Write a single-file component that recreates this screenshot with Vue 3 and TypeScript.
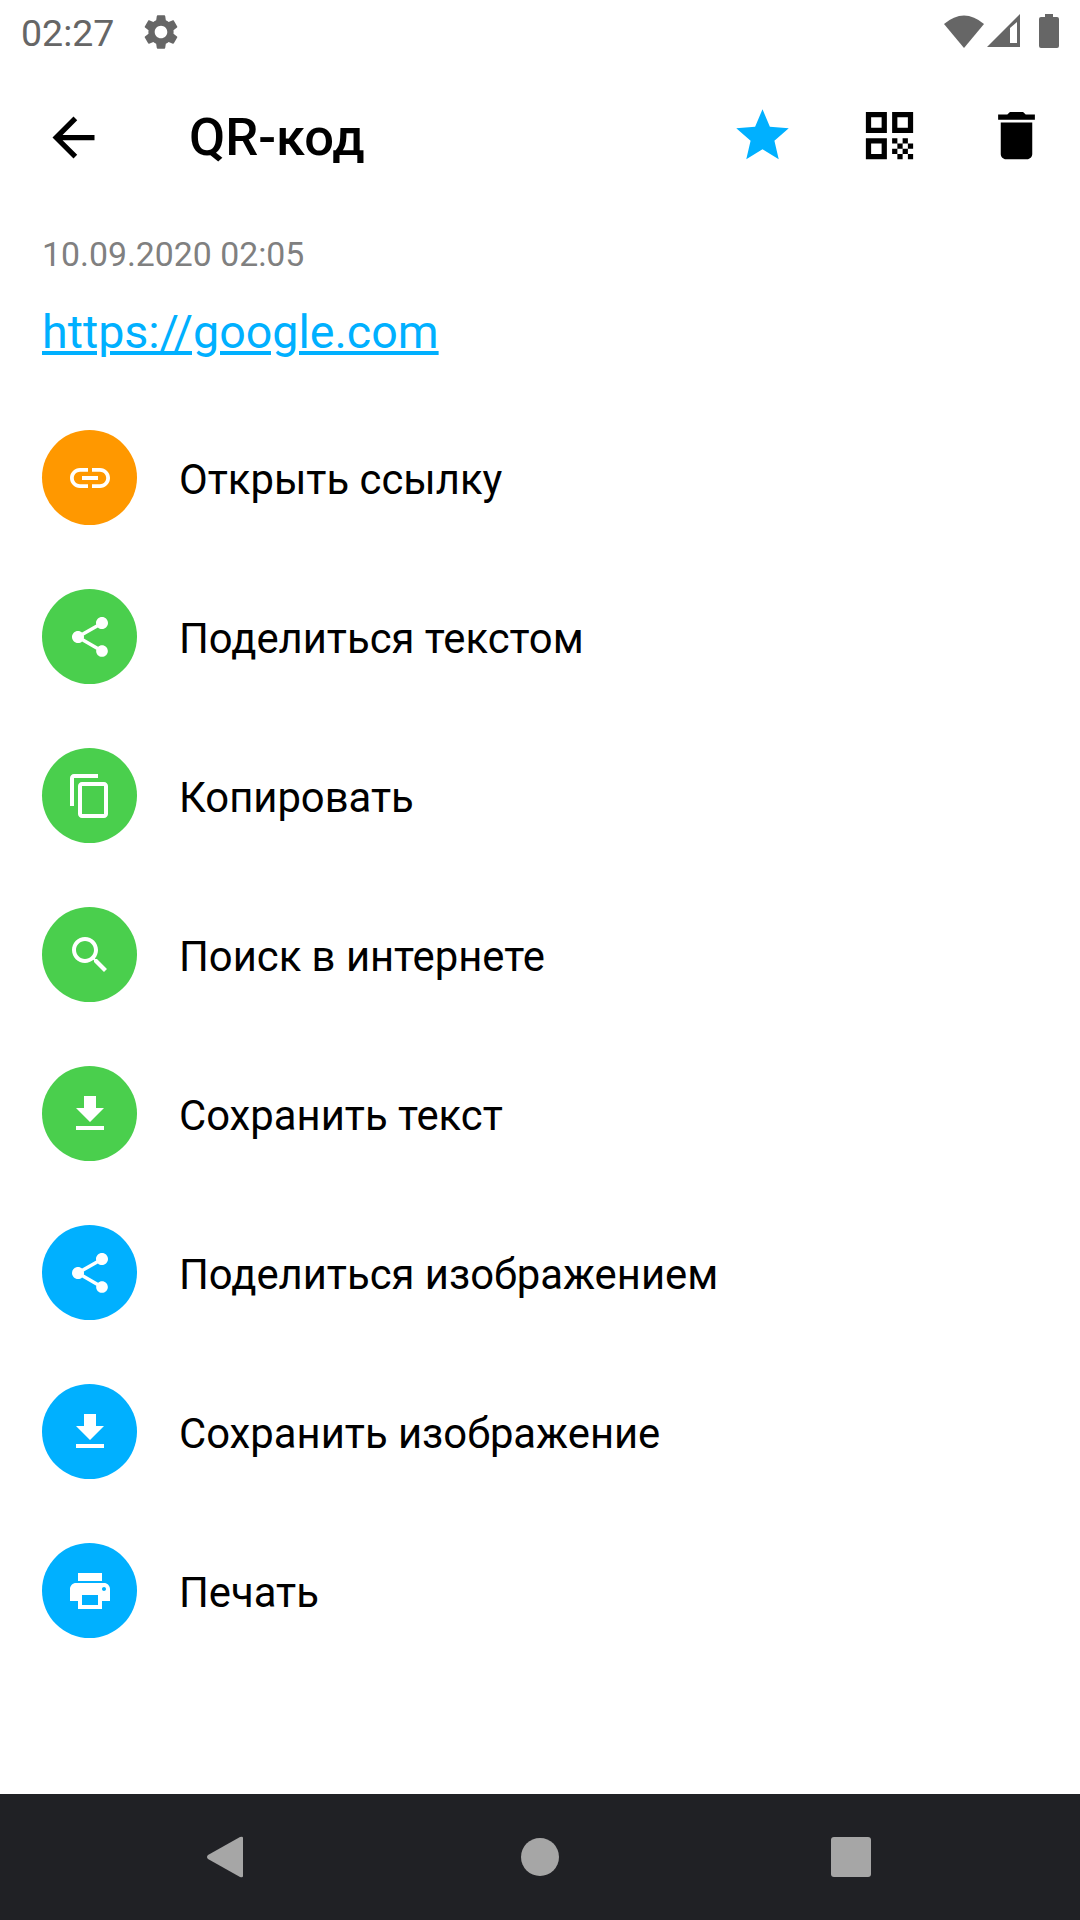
<template>
  <div class="screen">
    <div class="status-bar">
      <span class="clock">02:27</span>
      <svg class="gear" viewBox="0 0 24 24"><path :d="gearPath" /></svg>
      <div class="status-icons">
        <svg class="wifi" width="40" height="34" viewBox="0 0 40 34"><path d="M0 10 Q20 -7 40 10 L20 34 Z" /></svg>
        <svg class="signal" width="33" height="33" viewBox="0 0 33 33">
          <path fill-rule="evenodd" d="M33 0 V33 H0 Z M30 8 L23 14 V29 H30 Z" />
        </svg>
        <svg class="battery" width="20" height="34" viewBox="0 0 20 34">
          <path d="M6 0 H14 V3 H18 Q20 3 20 5 V32 Q20 34 18 34 H2 Q0 34 0 32 V5 Q0 3 2 3 H6 Z" />
        </svg>
      </div>
    </div>

    <header class="toolbar">
      <svg class="back" viewBox="0 0 24 24"><path d="M20 11H7.83l5.59-5.59L12 4l-8 8 8 8 1.41-1.41L7.83 13H20v-2z" /></svg>
      <h1 class="title">QR-код</h1>
      <div class="actions">
        <svg class="star" viewBox="0 0 24 24"><path d="M12 17.27L18.18 21l-1.64-7.03L22 9.24l-7.19-.61L12 2 9.19 8.63 2 9.24l5.46 4.73L5.82 21z" /></svg>
        <svg viewBox="0 0 24 24"><path d="M3 11h8V3H3v8zm2-6h4v4H5V5zM3 21h8v-8H3v8zm2-6h4v4H5v-4zM13 3v8h8V3h-8zm6 6h-4V5h4v4zM19 19h2v2h-2zM13 13h2v2h-2zM15 15h2v2h-2zM13 17h2v2h-2zM15 19h2v2h-2zM17 17h2v2h-2zM17 13h2v2h-2zM19 15h2v2h-2z" /></svg>
        <svg viewBox="0 0 24 24"><path d="M6 19c0 1.1.9 2 2 2h8c1.1 0 2-.9 2-2V7H6v12zM19 4h-3.5l-1-1h-5l-1 1H5v2h14V4z" /></svg>
      </div>
    </header>

    <main class="content">
      <div class="date">10.09.2020 02:05</div>
      <a class="link">https://google.com</a>
      <ul class="list">
        <li v-for="item in items" :key="item.label" class="row">
          <span class="circle" :class="item.color">
            <svg viewBox="0 0 24 24"><path :d="item.icon" /></svg>
          </span>
          <span class="label">{{ item.label }}</span>
        </li>
      </ul>
    </main>

    <nav class="nav-bar">
      <svg width="36" height="42" viewBox="0 0 36 42"><path d="M36 2 V40 Q36 42 33 41 L1 23 Q-1 21 1 19 L33 1 Q36 0 36 2 Z" /></svg>
      <span class="home"></span>
      <span class="recent"></span>
    </nav>
  </div>
</template>

<script setup lang="ts">
const gearPath =
  'M19.14 12.94c.04-.3.06-.61.06-.94 0-.32-.02-.64-.07-.94l2.03-1.58c.18-.14.23-.41.12-.61l-1.92-3.32c-.12-.22-.37-.29-.59-.22l-2.39.96c-.5-.38-1.03-.7-1.62-.94l-.36-2.54c-.04-.24-.24-.41-.48-.41h-3.84c-.24 0-.43.17-.47.41l-.36 2.54c-.59.24-1.13.57-1.62.94l-2.39-.96c-.22-.08-.47 0-.59.22L2.74 8.87c-.12.21-.08.47.12.61l2.03 1.58c-.05.3-.09.63-.09.94s.02.64.07.94l-2.03 1.58c-.18.14-.23.41-.12.61l1.92 3.32c.12.22.37.29.59.22l2.39-.96c.5.38 1.03.7 1.62.94l.36 2.54c.05.24.24.41.48.41h3.84c.24 0 .44-.17.47-.41l.36-2.54c.59-.24 1.13-.56 1.62-.94l2.39.96c.22.08.47 0 .59-.22l1.92-3.32c.12-.22.07-.47-.12-.61l-2.01-1.58zM12 15.6c-1.98 0-3.6-1.62-3.6-3.6s1.62-3.6 3.6-3.6 3.6 1.62 3.6 3.6-1.62 3.6-3.6 3.6z'

const link =
  'M3.9 12c0-1.71 1.39-3.1 3.1-3.1h4V7H7c-2.76 0-5 2.24-5 5s2.24 5 5 5h4v-1.9H7c-1.71 0-3.1-1.39-3.1-3.1zM8 13h8v-2H8v2zm9-6h-4v1.9h4c1.71 0 3.1 1.39 3.1 3.1s-1.39 3.1-3.1 3.1h-4V17h4c2.76 0 5-2.24 5-5s-2.24-5-5-5z'
const share =
  'M18 16.08c-.76 0-1.44.3-1.96.77L8.91 12.7c.05-.23.09-.46.09-.7s-.04-.47-.09-.7l7.05-4.11c.54.5 1.25.81 2.04.81 1.66 0 3-1.34 3-3s-1.34-3-3-3-3 1.34-3 3c0 .24.04.47.09.7L8.04 9.81C7.5 9.31 6.79 9 6 9c-1.66 0-3 1.34-3 3s1.34 3 3 3c.79 0 1.5-.31 2.04-.81l7.12 4.16c-.05.21-.08.43-.08.65 0 1.61 1.31 2.92 2.92 2.92 1.61 0 2.92-1.31 2.92-2.92s-1.31-2.92-2.92-2.92z'
const copy =
  'M16 1H4c-1.1 0-2 .9-2 2v14h2V3h12V1zm3 4H8c-1.1 0-2 .9-2 2v14c0 1.1.9 2 2 2h11c1.1 0 2-.9 2-2V7c0-1.1-.9-2-2-2zm0 16H8V7h11v14z'
const search =
  'M15.5 14h-.79l-.28-.27C15.41 12.59 16 11.11 16 9.5 16 5.91 13.09 3 9.5 3S3 5.91 3 9.5 5.91 16 9.5 16c1.61 0 3.09-.59 4.23-1.57l.27.28v.79l5 4.99L20.49 19l-4.99-5zm-6 0C7.01 14 5 11.99 5 9.5S7.01 5 9.5 5 14 7.01 14 9.5 11.99 14 9.5 14z'
const download = 'M19 9h-4V3H9v6H5l7 7 7-7zM5 18v2h14v-2H5z'
const print =
  'M19 8H5c-1.66 0-3 1.34-3 3v6h4v4h12v-4h4v-6c0-1.66-1.34-3-3-3zm-3 11H8v-5h8v5zm3-7c-.55 0-1-.45-1-1s.45-1 1-1 1 .45 1 1-.45 1-1 1zm-1-9H6v4h12V3z'

const items = [
  { label: 'Открыть ссылку', icon: link, color: 'orange' },
  { label: 'Поделиться текстом', icon: share, color: 'green' },
  { label: 'Копировать', icon: copy, color: 'green' },
  { label: 'Поиск в интернете', icon: search, color: 'green' },
  { label: 'Сохранить текст', icon: download, color: 'green' },
  { label: 'Поделиться изображением', icon: share, color: 'blue' },
  { label: 'Сохранить изображение', icon: download, color: 'blue' },
  { label: 'Печать', icon: print, color: 'blue' }
]
</script>

<style>
html,
body {
  margin: 0;
  background: #fff;
}
</style>

<style scoped>
.screen {
  width: 1080px;
  height: 1920px;
  display: flex;
  flex-direction: column;
  font-family: Roboto, sans-serif;
  background: #fff;
  overflow: hidden;
}

.status-bar {
  height: 66px;
  flex-shrink: 0;
  display: flex;
  align-items: center;
  padding: 0 21px 0 21px;
  box-sizing: border-box;
  color: #666;
}

.clock {
  font-size: 37.5px;
  line-height: 66px;
}

.gear {
  width: 42px;
  height: 42px;
  margin: 0 0 3px 26px;
  fill: #666;
}

.status-icons {
  margin: 0 0 5px auto;
  display: flex;
  align-items: center;
  fill: #666;
}

.signal {
  margin-left: 3px;
}

.battery {
  margin-left: 19px;
}

.toolbar {
  height: 142px;
  flex-shrink: 0;
  display: flex;
  align-items: center;
}

.back {
  width: 63px;
  height: 63px;
  margin-left: 42px;
  flex-shrink: 0;
}

.title {
  margin: 0 0 0 84px;
  font-size: 52.5px;
  font-weight: 500;
  color: #000;
}

.actions {
  margin: 0 32px 3px auto;
  display: flex;
  gap: 64px;
}

.actions svg {
  width: 63px;
  height: 63px;
  display: block;
}

.star {
  fill: #00b0ff;
}

.content {
  flex: 1;
  padding: 0 42px;
}

.date {
  font-size: 33.8px;
  line-height: 40px;
  color: #808080;
  margin-top: 27px;
}

.link {
  display: block;
  font-size: 46.6px;
  line-height: 52px;
  color: #00b0ff;
  text-decoration: underline;
  margin-top: 31px;
}

.list {
  list-style: none;
  margin: 72px 0 0;
  padding: 0;
  display: flex;
  flex-direction: column;
  gap: 64px;
}

.row {
  display: flex;
  align-items: center;
  height: 95px;
}

.circle {
  width: 95px;
  height: 95px;
  border-radius: 50%;
  display: flex;
  align-items: center;
  justify-content: center;
  flex-shrink: 0;
}

.circle svg {
  width: 48px;
  height: 48px;
  fill: #fff;
}

.orange {
  background: #ff9800;
}

.green {
  background: #4acf4d;
}

.blue {
  background: #00b0ff;
}

.label {
  margin: 4px 0 0 42px;
  font-size: 41.8px;
  color: #000;
}

.nav-bar {
  height: 126px;
  flex-shrink: 0;
  background: #202125;
  display: flex;
  align-items: center;
  padding-left: 207px;
  fill: #a6a6a6;
}

.home {
  width: 38px;
  height: 38px;
  margin-left: 278px;
  border-radius: 50%;
  background: #a6a6a6;
}

.recent {
  width: 40px;
  height: 40px;
  margin-left: 272px;
  border-radius: 3px;
  background: #a6a6a6;
}
</style>
